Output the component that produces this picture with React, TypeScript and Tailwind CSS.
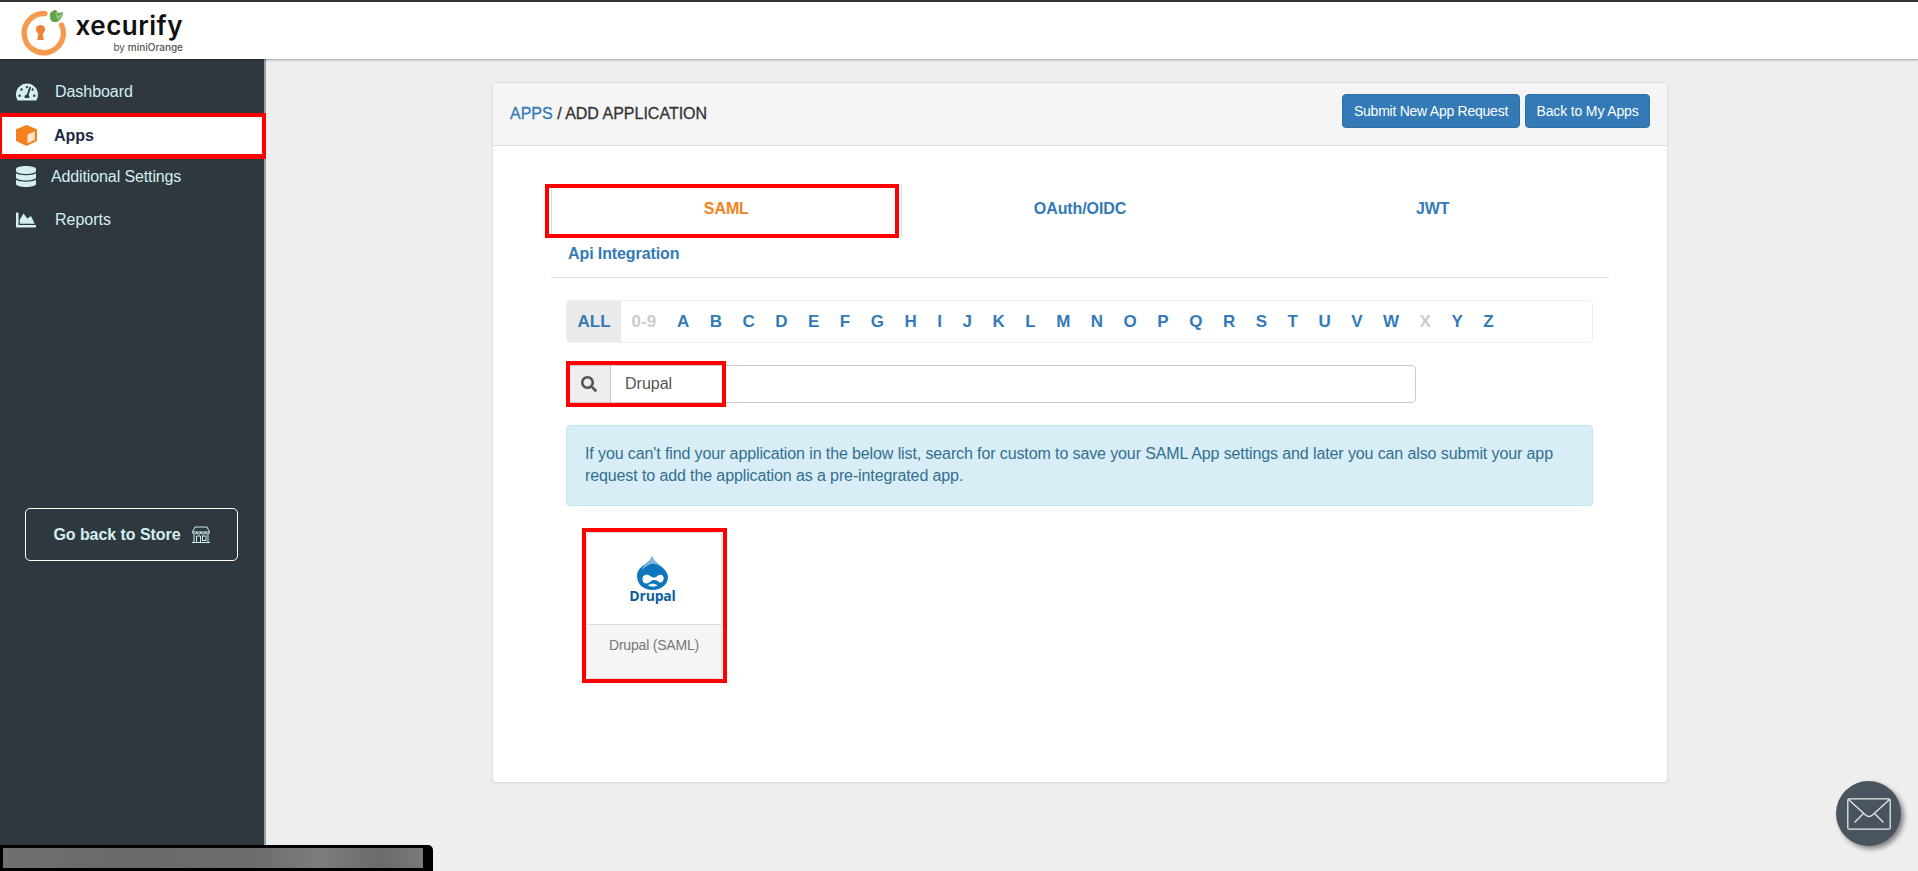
import { FaChartArea, FaDatabase, FaSearch, FaTachometerAlt } from 'react-icons/fa';

const letters = ['A', 'B', 'C', 'D', 'E', 'F', 'G', 'H', 'I', 'J', 'K', 'L', 'M', 'N', 'O', 'P', 'Q', 'R', 'S', 'T', 'U', 'V', 'W', 'X', 'Y', 'Z'];

function Logo() {
  return (
    <div className="flex items-center pl-[19px]">
      <svg width="48" height="46" viewBox="0 0 48 46" className="shrink-0">
        <path d="M26 3.6 A19.6 19.6 0 1 0 42.6 15" fill="none" stroke="#f79a50" strokeWidth="5.4" strokeLinecap="round" />
        <circle cx="21.5" cy="19.5" r="4.6" fill="#ee8236" />
        <path d="M19.8 21 h3.4 l1.6 9 h-6.6 z" fill="#ee8236" />
        <path d="M31 7 C30 2 34 0 37 0 L39 3 L44 2 C44 8 40 13 35 12 C33 12 31 10 31 7 Z" fill="#5ea54a" />
        <path d="M37 1 L39 6 L44 2 C44 6 42 9 39 10 C37 8 36 4 37 1 Z" fill="#8cc27c" />
      </svg>
      <div className="ml-[9px] flex w-[107px] flex-col items-end">
        <span className="mt-[-1px] font-['Inter'] text-[26px] leading-[30px] font-semibold tracking-[0.5px] text-[#111]">xecurify</span>
        <span className="font-['Inter'] text-[10px] leading-[13px] text-[#555]">
          by <span className="font-medium">miniOrange</span>
        </span>
      </div>
    </div>
  );
}

function StoreIcon() {
  return (
    <svg width="18" height="18" viewBox="0 0 18 18" fill="none" stroke="#cdeeee" strokeWidth="1">
      <path d="M3 1 h12 l2.5 5 h-17 z" />
      <path d="M.5 6 a2.1 2.1 0 0 0 4.2 0 a2.1 2.1 0 0 0 4.3 0 a2.1 2.1 0 0 0 4.3 0 a2.1 2.1 0 0 0 4.2 0" />
      <path d="M2 8.5 V16.5 M16 8.5 V16.5 M0 16.5 H18" />
      <path d="M4.5 16.5 V10 H8.5 V16.5" />
      <rect x="10.5" y="10" width="3.5" height="4.5" />
    </svg>
  );
}

function CubeIcon() {
  return (
    <svg width="21" height="21" viewBox="0 0 21 21">
      <path d="M10.5 0 L21 4.2 V16 L10.5 21 L0 16 V4.2 Z" fill="#f58220" />
      <path d="M11.5 9.6 L18.8 6.4 V14.8 L11.5 18.2 Z" fill="#fde6d2" />
    </svg>
  );
}

function DrupalDrop() {
  return (
    <svg width="31" height="34" viewBox="0 0 31 34">
      <path d="M15 0 C16 5 22 8 26 12 C30 16 31 19 31 21 C31 28.5 24 34 15.5 34 C7 34 0 28.5 0 20 C0 13 6 10 9.5 7 C12 5 14.5 3 15 0 Z" fill="#0d76bd" />
      <path d="M15 0 C16 5 21 7.5 24.5 11 C20 8 17 7 14 8 C11 9 7 11 5 14 C5 11 8 9 9.5 7 C12 5 14.5 3 15 0 Z" fill="#7fb9e0" />
      <path d="M5.5 23.5 C5 18.5 10.5 17.5 14 20.5 C16 22 18 22 21 19.5 C24 17.5 27.5 20 26.5 23.5 C25.8 26 24 27.5 22 26 C20 24.5 17.5 23.5 15 24.5 C13 25.5 11 27.5 9 27.5 C7 27.5 5.7 26 5.5 23.5 Z" fill="#ffffff" />
      <path d="M11 29.5 C13 27 18 27 20.5 29.5 C18 31 13.5 31 11 29.5 Z" fill="#ffffff" />
    </svg>
  );
}

function RedBox({ className }: { className: string }) {
  return <div className={`pointer-events-none absolute border-solid border-[#ff0000] ${className}`} />;
}

function Sidebar() {
  return (
    <aside className="flex w-[266px] shrink-0 flex-col border-r-2 border-[#9a9da0] bg-[#2f373f] pt-[11px] text-[16px] text-[#d2f0f0]">
      <div className="flex h-[43px] items-center pl-[16px]">
        <FaTachometerAlt size={22} />
        <span className="ml-[17px] tracking-[-0.05px]">Dashboard</span>
      </div>
      <div className="relative mr-[-2px] flex h-[46px] items-center bg-white pb-[1px] pl-[16px] font-bold text-[#1c2b45]">
        <CubeIcon />
        <span className="ml-[17px]">Apps</span>
        <RedBox className="inset-0 border-t-4 border-r-4 border-b-[5px] border-l-2" />
      </div>
      <div className="flex h-[35px] items-center pl-[16px]">
        <FaDatabase className="h-[21px] w-[20px]" preserveAspectRatio="none" />
        <span className="ml-[15px] tracking-[-0.12px]">Additional Settings</span>
      </div>
      <div className="mt-[5px] flex h-[42px] items-center pl-[16px]">
        <FaChartArea size={20} />
        <span className="ml-[19px]">Reports</span>
      </div>
      <button className="mt-[267px] ml-[25px] flex h-[53px] w-[213px] items-center justify-center gap-[11px] rounded-[5px] border border-white font-bold tracking-[-0.05px] text-[#d2f0f0]">
        Go back to Store
        <StoreIcon />
      </button>
    </aside>
  );
}

function Tabs() {
  return (
    <div className="mx-[58px] mt-[39px] border-b border-[#ddd] pb-[2px]">
      <div className="grid grid-cols-3 text-[16px] font-bold tracking-[-0.1px] text-[#337ab7]">
        <div className="relative mr-[2px] flex h-[52px] items-center justify-center border-x border-[#ddd] pb-[4px] text-[#f58220]">
          SAML
          <RedBox className="-top-[1px] -bottom-[1px] -left-[7px] right-[2px] border-4" />
        </div>
        <div className="flex h-[52px] items-center justify-center pb-[4px]">OAuth/OIDC</div>
        <div className="flex h-[52px] items-center justify-center pb-[4px]">JWT</div>
        <div className="flex h-[38px] items-center pb-[5px] pl-[17px]">Api Integration</div>
      </div>
    </div>
  );
}

function AlphaBar() {
  return (
    <div className="mt-[22px] mr-[74px] ml-[73px] flex h-[43px] items-center rounded-[4px] border border-[#eee] text-[17px] font-bold text-[#337ab7]">
      <span className="flex h-full items-center rounded-l-[4px] bg-[#eaeaea] px-[10.5px]">ALL</span>
      <span className="px-[10.5px] text-[#ccc]">0-9</span>
      {letters.map((l) => (
        <span key={l} className={`px-[10.25px] ${l === 'X' ? 'text-[#ccc]' : ''}`}>
          {l}
        </span>
      ))}
    </div>
  );
}

function SearchBar() {
  return (
    <div className="relative mt-[22px] ml-[73px] flex h-[38px] w-[850px] rounded-[4px] border border-[#ccc] text-[16px] text-[#555]">
      <div className="flex w-[44px] items-center justify-center border-r border-[#ccc] bg-[#eee] pl-[1px]">
        <FaSearch size={16} />
      </div>
      <div className="flex items-center pl-[14px]">Drupal</div>
      <RedBox className="-top-[5px] -bottom-[5px] -left-[1px] w-[160px] border-4" />
    </div>
  );
}

function AppCard() {
  return (
    <div className="relative mt-[26px] ml-[93px] w-[136px]">
      <div className="overflow-hidden rounded-[4px] border border-[#ddd]">
        <div className="flex h-[91px] flex-col items-center pt-[23px] pr-[3px]">
          <DrupalDrop />
          <span className="font-['Open_Sans'] text-[14px] leading-[11px] font-bold tracking-[-0.2px] text-[#0b5f9f]">Drupal</span>
        </div>
        <div className="h-[54px] border-t border-[#ddd] bg-[#f5f5f5] pt-[10px] text-center text-[14px] leading-[20px] tracking-[-0.2px] text-[#777]">
          Drupal (SAML)
        </div>
      </div>
      <RedBox className="-top-[4px] -right-[5px] -bottom-[4px] -left-[4px] border-4" />
    </div>
  );
}

export default function App() {
  return (
    <div className="relative flex h-[871px] w-full flex-col overflow-hidden bg-[#eee] font-['Liberation_Sans'] text-[#333]">
      <header className="z-10 h-[59px] shrink-0 border-t-2 border-[#333] bg-white pt-[8px] shadow-[0_1px_2px_rgba(0,0,0,0.35)]">
        <Logo />
      </header>
      <div className="flex min-h-0 flex-1">
        <Sidebar />
        <main className="flex-1 pt-[23px] pl-[226px]">
          <div className="h-[701px] w-[1176px] rounded-[4px] border border-[#ddd] bg-white shadow-[0_1px_1px_rgba(0,0,0,0.05)]">
            <div className="flex h-[63px] items-start justify-between border-b border-[#ddd] bg-[#f5f5f5] pr-[17px] pl-[17px]">
              <div className="mt-[21px] text-[16px] leading-[20px] [-webkit-text-stroke:0.3px]">
                <span className="text-[#337ab7]">APPS</span> / ADD APPLICATION
              </div>
              <div className="mt-[11px] flex gap-[5px] text-[14px] text-white">
                <button className="h-[34px] w-[178px] rounded-[4px] border border-[#2e6da4] bg-[#337ab7] tracking-[-0.25px]">Submit New App Request</button>
                <button className="h-[34px] w-[125px] rounded-[4px] border border-[#2e6da4] bg-[#337ab7] tracking-[-0.15px]">Back to My Apps</button>
              </div>
            </div>
            <Tabs />
            <AlphaBar />
            <SearchBar />
            <div className="mt-[22px] mr-[74px] ml-[73px] h-[81px] rounded-[4px] border border-[#bce8f1] bg-[#d9edf7] px-[18px] pt-[17px] text-[16px] leading-[22px] tracking-[-0.11px] text-[#31708f]">
              If you can't find your application in the below list, search for custom to save your SAML App settings and later you can also submit your app request to add the application as a pre-integrated app.
            </div>
            <AppCard />
          </div>
        </main>
      </div>

      <div className="absolute bottom-0 left-0 h-[26px] w-[433px] rounded-tr-[5px] border-t-[3px] border-r-[10px] border-b-[3px] border-l-[3px] border-black bg-[linear-gradient(90deg,#6f716f_0%,#686a69_30%,#6c6c6c_60%,#7d7d7c_75%,#6a6a6a_90%,#7a7a78_100%)]" />

      <div className="absolute top-[781px] left-[1836px] flex h-[65px] w-[65px] items-center justify-center rounded-full bg-[#4a545e] shadow-[3px_3px_5px_rgba(0,0,0,0.45)]">
        <svg width="44" height="32" viewBox="0 0 44 32" fill="none" stroke="#e8e8e8" strokeWidth="1.3" strokeLinecap="round">
          <rect x="0.8" y="0.8" width="42.4" height="30.4" rx="1.5" />
          <path d="M1.5 1.5 L18.5 17 Q22 20 25.5 17 L42.5 1.5" />
          <path d="M16 16 L8 24 M28 16 L36 24" />
        </svg>
      </div>
    </div>
  );
}
